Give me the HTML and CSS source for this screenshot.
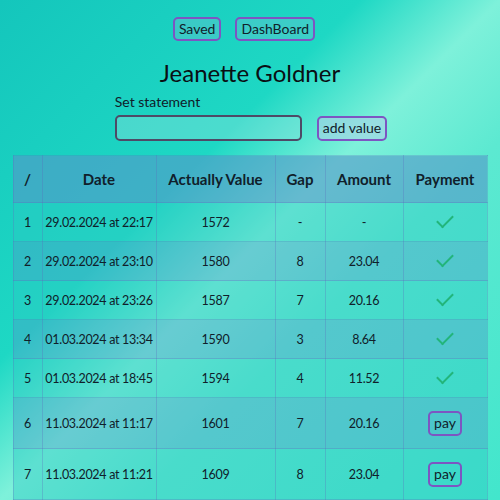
FILE: index.html
```html
<!DOCTYPE html>
<html>
<head>
<meta charset="utf-8">
<link rel="stylesheet" href="styles.css">
</head>
<body>
<div class="page">
  <nav class="nav">
    <button class="btn">Saved</button>
    <button class="btn">DashBoard</button>
  </nav>
  <h1 class="title">Jeanette Goldner</h1>
  <div class="form">
    <label class="label">Set statement</label>
    <div class="form-row">
      <input class="input" type="text">
      <button class="btn btn-add">add value</button>
    </div>
  </div>
  <table class="table">
    <colgroup>
      <col class="c1"><col class="c2"><col class="c3"><col class="c4"><col class="c5"><col class="c6">
    </colgroup>
    <thead>
      <tr><th>/</th><th>Date</th><th>Actually Value</th><th>Gap</th><th>Amount</th><th>Payment</th></tr>
    </thead>
    <tbody>
      <tr><td>1</td><td>29.02.2024 at 22:17</td><td>1572</td><td>-</td><td>-</td><td><span class="check"></span></td></tr>
      <tr><td>2</td><td>29.02.2024 at 23:10</td><td>1580</td><td>8</td><td>23.04</td><td><span class="check"></span></td></tr>
      <tr><td>3</td><td>29.02.2024 at 23:26</td><td>1587</td><td>7</td><td>20.16</td><td><span class="check"></span></td></tr>
      <tr><td>4</td><td>01.03.2024 at 13:34</td><td>1590</td><td>3</td><td>8.64</td><td><span class="check"></span></td></tr>
      <tr><td>5</td><td>01.03.2024 at 18:45</td><td>1594</td><td>4</td><td>11.52</td><td><span class="check"></span></td></tr>
      <tr class="tall"><td>6</td><td>11.03.2024 at 11:17</td><td>1601</td><td>7</td><td>20.16</td><td><button class="btn btn-pay">pay</button></td></tr>
      <tr class="tall"><td>7</td><td>11.03.2024 at 11:21</td><td>1609</td><td>8</td><td>23.04</td><td><button class="btn btn-pay">pay</button></td></tr>
    </tbody>
  </table>
</div>
</body>
</html>
```

FILE: styles.css
```css
html, body {
  margin: 0;
  height: 100%;
}
body {
  font-family: "Lato", "Noto Sans", sans-serif;
  color: #10202a;
  background: linear-gradient(135deg, #14c6bc 0%, #1ed8c4 36%, #7ef1da 50%, #5ce9d1 64%, #42e6cc 100%);
  background-attachment: fixed;
  overflow: hidden;
}
.page {
  display: flex;
  flex-direction: column;
  align-items: center;
  padding-top: 17px;
}
.nav {
  display: flex;
  gap: 14px;
  margin-left: -12px;
}
.btn {
  font-family: inherit;
  font-size: 14px;
  color: #10202a;
  background: rgba(120, 190, 210, 0.35);
  border: 2px solid #7d55c2;
  border-radius: 5px;
  padding: 0 4px;
  height: 24px;
  line-height: 20px;
}
.title {
  font-size: 24px;
  font-weight: 400;
  margin: 16px 0 0;
  line-height: 32px;
  color: #0a0f14;
}
.form {
  display: flex;
  flex-direction: column;
  margin-top: 4px;
  margin-left: 2px;
}
.label {
  font-size: 14px;
  line-height: 18px;
}
.form-row {
  display: flex;
  align-items: center;
  gap: 15px;
  margin-top: 4px;
}
.input {
  box-sizing: border-box;
  width: 187px;
  height: 26px;
  border: 2px solid #4e4a66;
  border-radius: 5px;
  background: rgba(160, 230, 225, 0.35);
  outline: none;
}
.btn-add {
  height: 25px;
  background: rgba(170, 210, 230, 0.6);
}
.table {
  margin-top: 14px;
  width: 474px;
  border-collapse: collapse;
  table-layout: fixed;
  font-size: 12.5px;
  letter-spacing: -0.3px;
  border: 1px solid rgba(90, 110, 190, 0.45);
}
.c1 { width: 29px; }
.c2 { width: 114px; }
.c3 { width: 119px; }
.c4 { width: 50px; }
.c5 { width: 78px; }
.c6 { width: 84px; }
.table th, .table td {
  border: 1px solid rgba(90, 110, 190, 0.3);
  text-align: center;
  padding: 0;
  white-space: nowrap;
}
.table th {
  height: 46px;
  font-size: 15px;
  font-weight: 700;
  letter-spacing: 0;
  background: rgba(85, 150, 200, 0.6);
}
.table td {
  height: 38px;
}
.table tbody tr:nth-child(odd) td {
  background: rgba(45, 200, 195, 0.4);
}
.table tbody tr:nth-child(even) td {
  background: rgba(75, 160, 200, 0.45);
}
.table tr.tall td {
  height: 50px;
}
.check {
  display: inline-block;
  width: 14px;
  height: 7px;
  border-left: 2px solid #22b57a;
  border-bottom: 2px solid #22b57a;
  transform: translateY(-3px) rotate(-45deg);
}
.btn-pay {
  height: 25px;
  padding: 0 4px;
  letter-spacing: 0;
  background: transparent;
}
```
